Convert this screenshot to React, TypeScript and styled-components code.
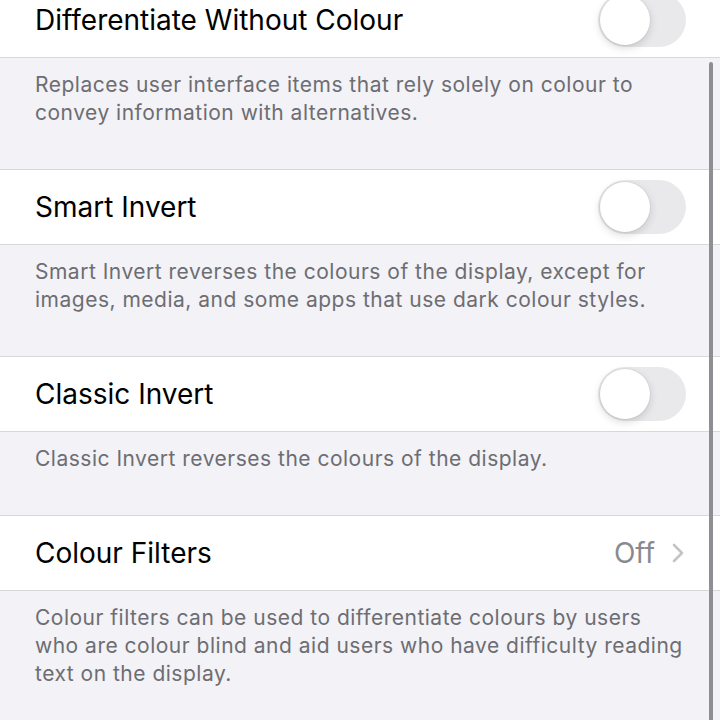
import styled, { createGlobalStyle } from 'styled-components';

const GlobalStyle = createGlobalStyle`
  html, body {
    margin: 0;
    padding: 0;
    background: #f2f2f7;
  }
  body {
    font-family: Inter, "Noto Sans", "Liberation Sans", sans-serif;
    -webkit-font-smoothing: antialiased;
  }
`;

const Screen = styled.div`
  position: relative;
  width: 720px;
  height: 720px;
  overflow: hidden;
  background: #f2f2f7;
`;

const List = styled.div`
  margin-top: -18px;
  display: flex;
  flex-direction: column;
`;

const Row = styled.div`
  display: flex;
  align-items: center;
  height: 74px;
  padding: 0 35px;
  background: #ffffff;
  border-top: 1px solid #d8d8dc;
  border-bottom: 1px solid #d8d8dc;
`;

const Label = styled.span`
  flex: 1;
  font-size: 28px;
  color: #000000;
`;

const Value = styled.span`
  font-size: 28px;
  color: #8a8a8e;
  margin-right: 16px;
`;

const Footer = styled.p`
  margin: 0;
  padding: 13px 35px 42px;
  font-size: 21px;
  line-height: 28px;
  letter-spacing: 0.5px;
  color: #6d6d72;
`;

const Track = styled.div<{ $on?: boolean }>`
  position: relative;
  width: 88px;
  height: 54px;
  margin-right: -1px;
  border-radius: 27px;
  background: ${(p) => (p.$on ? '#34c759' : '#e9e9eb')};
`;

const Knob = styled.div<{ $on?: boolean }>`
  position: absolute;
  top: 2px;
  left: ${(p) => (p.$on ? '36px' : '2px')};
  width: 50px;
  height: 50px;
  border-radius: 50%;
  background: #ffffff;
  box-shadow: 0 3px 8px rgba(0, 0, 0, 0.15), 0 0 0 1px rgba(0, 0, 0, 0.04);
`;

const ScrollThumb = styled.div`
  position: absolute;
  top: 62px;
  right: 7px;
  width: 4px;
  height: 700px;
  border-radius: 2px;
  background: #8e8e93;
`;

function Toggle({ on }: { on?: boolean }) {
  return (
    <Track $on={on}>
      <Knob $on={on} />
    </Track>
  );
}

function Chevron() {
  return (
    <svg width="14" height="20" viewBox="0 0 14 20" fill="none">
      <path d="M3 2 L11 10 L3 18" stroke="#c4c4c7" strokeWidth="2.6" strokeLinecap="round" strokeLinejoin="round" />
    </svg>
  );
}

type Item = {
  label: string;
  footer: string;
  value?: string;
};

const items: Item[] = [
  {
    label: 'Differentiate Without Colour',
    footer: 'Replaces user interface items that rely solely on colour to convey information with alternatives.',
  },
  {
    label: 'Smart Invert',
    footer: 'Smart Invert reverses the colours of the display, except for images, media, and some apps that use dark colour styles.',
  },
  {
    label: 'Classic Invert',
    footer: 'Classic Invert reverses the colours of the display.',
  },
  {
    label: 'Colour Filters',
    value: 'Off',
    footer: 'Colour filters can be used to differentiate colours by users who are colour blind and aid users who have difficulty reading text on the display.',
  },
];

export default function App() {
  return (
    <>
      <GlobalStyle />
      <Screen>
        <List>
          {items.map((item) => (
            <section key={item.label}>
              <Row>
                <Label>{item.label}</Label>
                {item.value ? (
                  <>
                    <Value>{item.value}</Value>
                    <Chevron />
                  </>
                ) : (
                  <Toggle />
                )}
              </Row>
              <Footer>{item.footer}</Footer>
            </section>
          ))}
        </List>
        <ScrollThumb />
      </Screen>
    </>
  );
}
